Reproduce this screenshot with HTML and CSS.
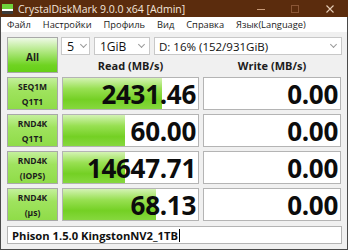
FILE: index.html
```html
<!DOCTYPE html>
<html>
<head>
<meta charset="utf-8">
<link rel="stylesheet" href="styles.css">
</head>
<body>
<div class="window">
  <div class="titlebar">
    <svg class="appicon" width="11" height="10" viewBox="0 0 11 10">
      <rect x="0" y="0" width="11" height="5" fill="#6fd23a"/>
      <rect x="0" y="5" width="11" height="2" fill="#ffffff"/>
      <rect x="0" y="7" width="11" height="3" fill="#3a3a3a"/>
    </svg>
    <span class="title">CrystalDiskMark 9.0.0 x64 [Admin]</span>
    <div class="controls">
      <span class="ctl min"><svg width="8" height="8" viewBox="0 0 8 8"><line x1="0" y1="4.5" x2="8" y2="4.5" stroke="#c99a78" stroke-width="1"/></svg></span>
      <span class="ctl max"><svg width="8" height="8" viewBox="0 0 8 8"><rect x="0.5" y="0.5" width="7" height="7" fill="none" stroke="#8a5636" stroke-width="1"/></svg></span>
      <span class="ctl close"><svg width="8" height="8" viewBox="0 0 8 8"><path d="M0.5 0.5 L7.5 7.5 M7.5 0.5 L0.5 7.5" stroke="#e6cdb6" stroke-width="1.1"/></svg></span>
    </div>
  </div>
  <div class="menubar">
    <span>Файл</span><span>Настройки</span><span>Профиль</span><span>Вид</span><span>Справка</span><span>Язык(Language)</span>
  </div>
  <div class="main">
    <div class="grid">
      <div class="btn all">All</div>
      <div class="combos">
        <div class="combo c1"><span>5</span><span class="chev"></span></div>
        <div class="combo c2"><span>1GiB</span><span class="chev"></span></div>
        <div class="combo c3"><span>D: 16% (152/931GiB)</span><span class="chev"></span></div>
      </div>
      <div class="head">Read (MB/s)</div>
      <div class="head">Write (MB/s)</div>

      <div class="btn lab">SEQ1M<br>Q1T1</div>
      <div class="cell"><div class="bar" style="width:73%"></div><span class="num">2431.46</span></div>
      <div class="cell"><span class="num">0.00</span></div>

      <div class="btn lab">RND4K<br>Q1T1</div>
      <div class="cell"><div class="bar" style="width:46%"></div><span class="num">60.00</span></div>
      <div class="cell"><span class="num">0.00</span></div>

      <div class="btn lab">RND4K<br>(IOPS)</div>
      <div class="cell"><div class="bar" style="width:46%"></div><span class="num">14647.71</span></div>
      <div class="cell"><span class="num">0.00</span></div>

      <div class="btn lab">RND4K<br>(µs)</div>
      <div class="cell"><div class="bar" style="width:69%"></div><span class="num">68.13</span></div>
      <div class="cell"><span class="num">0.00</span></div>
    </div>
    <div class="comment">Phison 1.5.0 KingstonNV2_1TB<span class="caret"></span></div>
  </div>
</div>
</body>
</html>
```

FILE: styles.css
```css
* { box-sizing: border-box; }
html, body { margin: 0; padding: 0; }
body {
  width: 348px;
  height: 250px;
  overflow: hidden;
  font-family: "Open Sans", "Noto Sans", sans-serif;
  background: #ffffff;
}
.window {
  width: 348px;
  height: 250px;
  border: 1px solid #4a4a4a;
  border-top: none;
  background: #f0f0f0;
  display: flex;
  flex-direction: column;
}
.titlebar {
  height: 17px;
  background: #5b2c0d;
  display: flex;
  align-items: center;
  padding-left: 2px;
  margin: 0 -1px;
}
.appicon { flex: none; margin-top: 1px; }
.title {
  color: #f3e6dc;
  font-size: 10.5px;
  margin-left: 5px;
}
.controls {
  margin-left: auto;
  display: flex;
  height: 100%;
}
.ctl {
  width: 34px;
  display: flex;
  align-items: center;
  justify-content: center;
}
.ctl.close { width: 36px; }
.menubar {
  height: 15px;
  background: #ffffff;
  display: flex;
  align-items: center;
  font-size: 9.3px;
  color: #1a1a1a;
  padding-left: 0;
}
.menubar span { padding: 0 6px; }
.main {
  flex: 1;
  padding: 5px 6px 0 6px;
}
.grid {
  display: grid;
  grid-template-columns: 51px 137px 138px;
  grid-template-rows: 18px 18px repeat(4, 37px);
  column-gap: 4px;
}
.grid > .lab, .grid > .cell { margin-top: 4px; }
.btn {
  border: 1px solid #a8a8a8;
  display: flex;
  align-items: center;
  justify-content: center;
  text-align: center;
  font-weight: 700;
  color: #1c1c1c;
}
.all {
  grid-row: 1 / span 2;
  grid-column: 1;
  font-size: 10px;
  background: linear-gradient(#eef9e6 0%, #b7ea8c 35%, #6fd321 80%, #66cf18 100%);
  padding-top: 4px;
}
.lab {
  font-size: 8.5px;
  line-height: 15px;
  background: linear-gradient(#c4f09c 0%, #9fe35e 40%, #8fdc48 100%);
}
.combos {
  grid-column: 2 / span 2;
  grid-row: 1;
  display: flex;
  gap: 4px;
  margin-left: -1px;
  margin-right: -1px;
}
.combo {
  height: 18px;
  background: #ffffff;
  border: 1px solid #c8c8c8;
  display: flex;
  align-items: center;
  font-size: 11.5px;
  color: #111;
  padding-left: 4px;
  padding-right: 5px;
}
.combo span:first-child { flex: 1; }
.c1 { width: 29px; padding-left: 5px; padding-right: 3px; font-size: 12.5px; }
.c2 { width: 56px; padding-left: 5px; font-size: 12px; }
.c3 { flex: 1; }
.chev {
  width: 5px;
  height: 5px;
  border-right: 1px solid #9a9a9a;
  border-bottom: 1px solid #9a9a9a;
  transform: rotate(45deg);
  margin-top: -3px;
  flex: none;
}
.head {
  grid-row: 2;
  font-size: 11px;
  font-weight: 700;
  color: #1c1c1c;
  text-align: center;
  line-height: 18px;
  padding-top: 2px;
}
.cell {
  position: relative;
  background: #ffffff;
  border: 1px solid #b4b4b4;
  display: flex;
  align-items: center;
  justify-content: flex-end;
}
.bar {
  position: absolute;
  left: 0;
  top: 0;
  bottom: 0;
  background: linear-gradient(#d4f3b4 0%, #98e052 35%, #74d024 70%, #86d83e 100%);
}
.num {
  position: relative;
  font-size: 26px;
  font-weight: 700;
  color: #0c0c0c;
  padding-right: 2px;
  line-height: 31px;
  margin-top: 2px;
  letter-spacing: -0.3px;
}
.comment {
  margin-top: 5px;
  width: 335px;
  height: 18px;
  background: #ffffff;
  border: 1px solid #b4b4b4;
  font-size: 11.2px;
  font-weight: 700;
  color: #111;
  padding-left: 4px;
  display: flex;
  align-items: center;
}
.caret {
  width: 1px;
  height: 13px;
  background: #000;
  margin-left: 1px;
}
```
